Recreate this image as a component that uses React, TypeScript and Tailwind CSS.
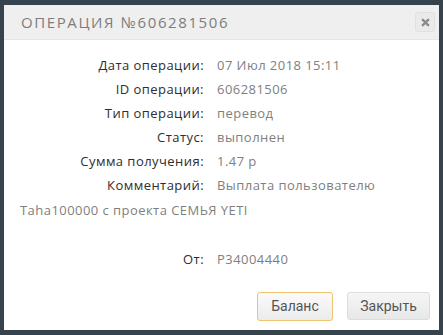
export default function App() {
  const rows: [string, string][] = [
    ["Дата операции:", "07 Июл 2018 15:11"],
    ["ID операции:", "606281506"],
    ["Тип операции:", "перевод"],
    ["Статус:", "выполнен"],
    ["Сумма получения:", "1.47 р"],
  ];

  return (
    <div className="w-[443px] h-[335px] bg-[#36434c] pt-[5px] pl-[4px]">
      <div className="w-[435px] h-[325px] bg-white flex flex-col font-['Open_Sans',sans-serif]">
        {/* header */}
        <div className="h-[35px] bg-[#efefef] border-b border-[#e6e6e6] flex items-center justify-between pl-[17px] pr-[4px]">
          <span className="text-[15px] tracking-[1.6px] text-[#7d7d7d] uppercase">
            Операция №606281506
          </span>
          <button className="w-[20px] h-[20px] rounded-[3px] border border-[#e0e0e0] bg-[#eaeaea] flex items-center justify-center">
            <svg width="9" height="9" viewBox="0 0 10 10">
              <path d="M2 2 L8 8 M8 2 L2 8" stroke="#8a8a8a" strokeWidth="2.6" strokeLinecap="round" />
            </svg>
          </button>
        </div>

        {/* body */}
        <div className="pt-[13px] pl-[16px] pr-[16px] text-[13px] tracking-[0.45px] leading-[24px]">
          {rows.map(([label, value]) => (
            <div key={label}>
              <span className="inline-block w-[184px] text-right text-[#2e2e2e] mr-[13px]">{label}</span>
              <span className="text-[#808080]">{value}</span>
            </div>
          ))}
          <div className="leading-[25px]">
            <span className="inline-block w-[184px] text-right text-[#2e2e2e] mr-[13px]">Комментарий:</span>
            <span className="text-[#808080]">Выплата пользователю Taha100000 с проекта СЕМЬЯ YETI</span>
          </div>
          <div className="h-[24px]" />
          <div>
            <span className="inline-block w-[184px] text-right text-[#2e2e2e] mr-[13px]">От:</span>
            <span className="text-[#808080]">P34004440</span>
          </div>
        </div>

        {/* footer */}
        <div className="mt-auto flex justify-end gap-[14px] pr-[9px] pb-[9px] font-['Roboto',sans-serif] text-[14px] text-[#555]">
          <button className="w-[76px] h-[29px] rounded-[3px] border border-[#efc46e] bg-gradient-to-b from-[#fafafa] to-[#ececec]">
            Баланс
          </button>
          <button className="w-[83px] h-[28px] rounded-[3px] border border-[#dcdcdc] bg-gradient-to-b from-[#f5f5f5] to-[#e8e8e8]">
            Закрыть
          </button>
        </div>
      </div>
    </div>
  );
}
